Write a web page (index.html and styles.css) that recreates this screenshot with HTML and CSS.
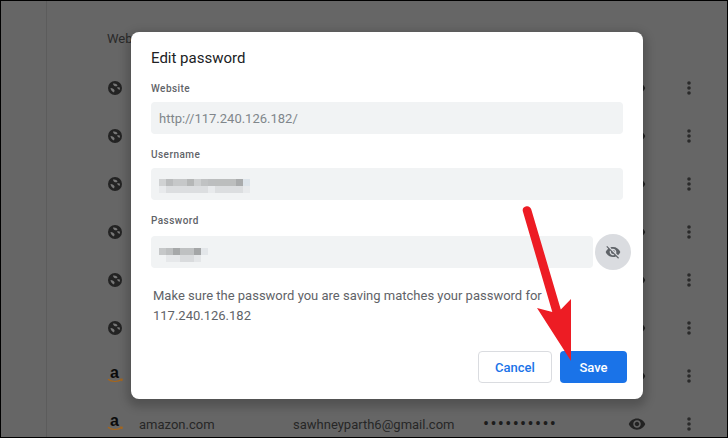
FILE: index.html
```html
<!DOCTYPE html>
<html lang="en">
<head>
    <meta charset="UTF-8">
    <meta name="viewport" content="width=device-width, initial-scale=1.0">
    <title>Edit password</title>
    <link rel="stylesheet" href="styles.css">
</head>
<body>

    <svg class="icon-defs" aria-hidden="true">
        <symbol id="globe" viewBox="0 0 16 16"><circle cx="8" cy="8" r="7"/><path d="M6 3.600C8 3.200 10 4 10.500 5.500 10 6.500 8.500 6.500 7.500 6 6.500 5.500 6 4.500 6 3.600z" class="globe-land"/><path d="M3.500 8C5 7.800 7 8.800 7.600 10.500L7 12.500C5 12 3.800 10 3.500 8z" class="globe-land"/><path d="M10 7.500C11.500 7 12.500 7.200 13 7.800L12.600 10C11.500 9.500 10.500 8.800 10 7.500z" class="globe-land"/></symbol>
        <symbol id="eye" viewBox="0 0 24 24"><path d="M12 4.500C7 4.500 2.730 7.610 1 12c1.730 4.390 6 7.500 11 7.500s9.270-3.110 11-7.500c-1.730-4.390-6-7.500-11-7.500zM12 17c-2.760 0-5-2.240-5-5s2.240-5 5-5 5 2.240 5 5-2.240 5-5 5zm0-8c-1.660 0-3 1.340-3 3s1.340 3 3 3 3-1.340 3-3-1.340-3-3-3z"/></symbol>
        <symbol id="kebab" viewBox="0 0 4 14"><circle cx="2" cy="2" r="1.8"/><circle cx="2" cy="7" r="1.8"/><circle cx="2" cy="12" r="1.8"/></symbol>
        <symbol id="amazon" viewBox="0 0 16 16" overflow="visible"><text x="7.500" y="10" text-anchor="middle" class="amazon-a">a</text><path d="M1 11.200c3.600 2.900 9.800 3.100 13.800.4M13 11l2.200.2-.5 2" class="amazon-smile"/></symbol>
    </svg>

    <div class="page">
        <div class="sidebar"></div>
        <div class="list">
            <div class="list-head">Website</div>
            <div class="row"><svg class="site-icon"><use href="#globe"/></svg><span></span><span></span><span></span><svg class="eye"><use href="#eye"/></svg><svg class="kebab"><use href="#kebab"/></svg></div>
            <div class="row"><svg class="site-icon"><use href="#globe"/></svg><span></span><span></span><span></span><svg class="eye"><use href="#eye"/></svg><svg class="kebab"><use href="#kebab"/></svg></div>
            <div class="row"><svg class="site-icon"><use href="#globe"/></svg><span></span><span></span><span></span><svg class="eye"><use href="#eye"/></svg><svg class="kebab"><use href="#kebab"/></svg></div>
            <div class="row"><svg class="site-icon"><use href="#globe"/></svg><span></span><span></span><span></span><svg class="eye"><use href="#eye"/></svg><svg class="kebab"><use href="#kebab"/></svg></div>
            <div class="row"><svg class="site-icon"><use href="#globe"/></svg><span></span><span></span><span></span><svg class="eye"><use href="#eye"/></svg><svg class="kebab"><use href="#kebab"/></svg></div>
            <div class="row"><svg class="site-icon"><use href="#globe"/></svg><span></span><span></span><span></span><svg class="eye"><use href="#eye"/></svg><svg class="kebab"><use href="#kebab"/></svg></div>
            <div class="row"><svg class="site-icon"><use href="#amazon"/></svg><span></span><span></span><span></span><svg class="eye"><use href="#eye"/></svg><svg class="kebab"><use href="#kebab"/></svg></div>
            <div class="row"><svg class="site-icon"><use href="#amazon"/></svg><span>amazon.com</span><span>sawhneyparth6@gmail.com</span><span class="dots">••••••••••</span><svg class="eye"><use href="#eye"/></svg><svg class="kebab"><use href="#kebab"/></svg></div>
        </div>

        <!-- Dialog -->
        <div class="dialog">
            <h2 class="dialog-title">Edit password</h2>

            <div class="field">
                <div class="field-label">Website</div>
                <div class="input input-url">http://117.240.126.182/</div>
            </div>

            <div class="field">
                <div class="field-label">Username</div>
                <div class="input">
                    <svg class="blur blur-user" viewBox="0 0 91 14">
                        <rect x="0" y="0" width="7" height="7" fill="#d0d2d3"/><rect x="7" y="0" width="7" height="7" fill="#babcbd"/><rect x="14" y="0" width="14" height="7" fill="#c6c8c9"/><rect x="28" y="0" width="7" height="7" fill="#b5b7b7"/><rect x="35" y="0" width="7" height="7" fill="#cdcfd0"/><rect x="42" y="0" width="7" height="7" fill="#c0c2c3"/><rect x="49" y="0" width="7" height="7" fill="#bcbebf"/><rect x="56" y="0" width="21" height="7" fill="#bcbebe"/><rect x="77" y="0" width="7" height="7" fill="#a9abac"/><rect x="84" y="0" width="7" height="7" fill="#dde4ea"/>
                        <rect x="0" y="7" width="7" height="7" fill="#e8eaec"/><rect x="7" y="7" width="42" height="7" fill="#dcdee0"/><rect x="49" y="7" width="7" height="7" fill="#e8eaec"/><rect x="56" y="7" width="28" height="7" fill="#dcdee0"/><rect x="84" y="7" width="7" height="7" fill="#e8eaec"/>
                    </svg>
                </div>
            </div>

            <div class="field">
                <div class="field-label">Password</div>
                <div class="password-row">
                    <div class="input input-password">
                        <svg class="blur blur-pass" viewBox="0 0 49 14">
                            <rect x="0" y="0" width="7" height="7" fill="#c6c8c9"/><rect x="7" y="0" width="7" height="7" fill="#bdbfc0"/><rect x="14" y="0" width="7" height="7" fill="#a6a8a9"/><rect x="21" y="0" width="14" height="7" fill="#bfc1c2"/><rect x="35" y="0" width="7" height="7" fill="#a4a6a7"/><rect x="42" y="0" width="7" height="7" fill="#e3e6e9"/>
                            <rect x="7" y="7" width="14" height="7" fill="#e6e8ea"/><rect x="21" y="7" width="14" height="7" fill="#d9dbdd"/><rect x="35" y="7" width="7" height="7" fill="#e4e6e8"/>
                        </svg>
                    </div>
                    <div class="reveal">
                        <svg class="reveal-icon" viewBox="0 0 24 24"><path d="M12 7c2.760 0 5 2.240 5 5 0 .65-.13 1.260-.36 1.830l2.920 2.920c1.510-1.260 2.700-2.890 3.430-4.750-1.730-4.390-6-7.500-11-7.500-1.400 0-2.740.25-3.980.7l2.160 2.160C10.740 7.130 11.350 7 12 7zM2 4.270l2.280 2.280.46.46C3.080 8.300 1.780 10.020 1 12c1.730 4.390 6 7.500 11 7.500 1.550 0 3.030-.3 4.380-.84l.42.42L19.730 22 21 20.730 3.270 3 2 4.270zM7.530 9.800l1.550 1.550c-.05.21-.08.43-.08.65 0 1.660 1.340 3 3 3 .22 0 .44-.03.65-.08l1.550 1.550c-.67.33-1.410.53-2.200.53-2.760 0-5-2.240-5-5 0-.79.2-1.530.53-2.200zm4.310-.78l3.150 3.150.02-.16c0-1.660-1.340-3-3-3l-.17.01z"/></svg>
                    </div>
                </div>
            </div>

            <p class="note">Make sure the password you are saving matches your password for 117.240.126.182</p>

            <div class="dialog-buttons">
                <button class="btn btn-cancel">Cancel</button>
                <button class="btn btn-save">Save</button>
            </div>
        </div>

        <!-- Red arrow drawn over the screenshot -->
        <svg class="arrow" viewBox="0 0 728 438">
            <path d="M522.900 211.500c-.9-3.200 1-5 3.600-5.300 2.400-.3 4.100 1 4.800 3.300L560.800 309.500 571 299 571 361 537 308 552.300 312z"/>
        </svg>
    </div>

</body>
</html>
```

FILE: styles.css
```css
* {
    box-sizing: border-box;
}
body {
    margin: 0;
    font-family: Roboto, "Liberation Sans", sans-serif;
    background-color: #666;
    overflow: hidden;
}
.icon-defs {
    display: none;
}
.page {
    position: relative;
    display: flex;
    width: 728px;
    height: 438px;
    border: 1px solid #000;
    background-color: #666;
    overflow: hidden;
}
.sidebar {
    width: 46px;
    border-right: 1px solid #5c5c5c;
    flex-shrink: 0;
}
.list {
    flex: 1;
    padding-left: 60px;
}
.list-head {
    height: 63px;
    padding-top: 30px;
    font-size: 13px;
    line-height: 16px;
    color: #2a2a2a;
}
.row {
    display: grid;
    grid-template-columns: 32px 154px 190px 145px 18px 1fr;
    align-items: center;
    height: 48px;
    font-size: 13px;
    color: #262626;
}
.site-icon {
    width: 16px;
    height: 16px;
    fill: #232323;
    overflow: visible;
}
.globe-land {
    fill: #777;
    stroke: none;
}
.amazon-a {
    font-family: "Liberation Sans", sans-serif;
    font-size: 16px;
    font-weight: 700;
    fill: #0b0b0b;
}
.amazon-smile {
    fill: none;
    stroke: #a8661a;
    stroke-width: 1.2;
}
.dots {
    height: 16px;
    font-size: 18px;
    line-height: 16px;
    letter-spacing: 1.35px;
    color: #1c1c1c;
}
.eye {
    width: 18px;
    height: 18px;
    fill: #232323;
}
.kebab {
    width: 4px;
    height: 14px;
    margin-left: 41px;
    fill: #2a2a2a;
}

.dialog {
    position: absolute;
    top: 31px;
    left: 130px;
    display: flex;
    flex-direction: column;
    width: 512px;
    height: 367px;
    padding: 16px 20px;
    background: #fff;
    border-radius: 8px;
    box-shadow: 0 4px 10px 4px rgba(0, 0, 0, 0.2);
}
.dialog-title {
    margin: 0;
    font-size: 15px;
    font-weight: 400;
    line-height: 20px;
    color: #202124;
}
.field {
    margin-top: 15px;
}
.field-label {
    margin-bottom: 7px;
    font-size: 10px;
    font-weight: 500;
    line-height: 12px;
    letter-spacing: 0.45px;
    color: #5f6368;
}
.input {
    display: flex;
    align-items: center;
    height: 32px;
    padding-left: 8px;
    background: #f1f3f4;
    border-radius: 4px;
    font-size: 13px;
}
.input-url {
    color: #80868b;
}
.blur {
    display: block;
    height: 14px;
}
.blur-user {
    width: 91px;
    margin-top: 4px;
}
.blur-pass {
    width: 49px;
    margin-top: 6px;
}
.password-row {
    display: flex;
    align-items: center;
    gap: 2px;
    margin-right: -8px;
}
.input-password {
    flex: 1;
}
.reveal {
    display: flex;
    justify-content: center;
    align-items: center;
    width: 36px;
    height: 36px;
    background: #dadce0;
    border-radius: 50%;
}
.reveal-icon {
    width: 16px;
    height: 16px;
    fill: #5f6368;
}
.note {
    margin: 16px 0 0 2px;
    font-size: 13px;
    line-height: 20px;
    color: #5f6368;
}
.dialog-buttons {
    display: flex;
    justify-content: flex-end;
    gap: 8px;
    margin-top: auto;
    margin-right: -4px;
}
.btn {
    height: 32px;
    border-radius: 4px;
    font-family: inherit;
    font-size: 13px;
    font-weight: 500;
}
.btn-cancel {
    width: 74px;
    background: #fff;
    border: 1px solid #dadce0;
    color: #1a73e8;
}
.btn-save {
    width: 67px;
    background: #1a73e8;
    border: none;
    color: #fff;
}
.arrow {
    position: absolute;
    top: -1px;
    left: -1px;
    width: 728px;
    height: 438px;
    fill: #ed1c24;
    pointer-events: none;
}
```
